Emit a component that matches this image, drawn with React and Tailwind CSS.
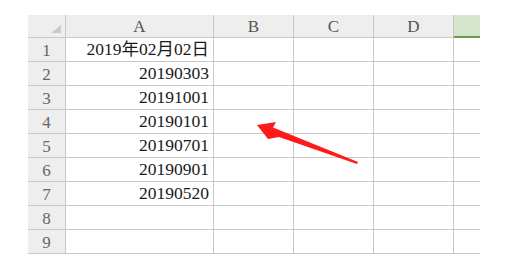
import React from "react";

const rows = [
  "2019年02月02日",
  "20190303",
  "20191001",
  "20190101",
  "20190701",
  "20190901",
  "20190520",
  "",
  "",
];

const font = { fontFamily: '"Liberation Serif", "Noto Sans CJK SC", serif' };

export default function App() {
  return (
    <div className="relative w-[515px] h-[255px] overflow-hidden bg-white pt-[15px] pl-[28px]" style={font}>
      <div className="grid grid-cols-[38px_148px_80px_80px_80px_26px] auto-rows-[24px] grid-rows-[23px]">
        {/* header row */}
        <div className="relative bg-[#eeeeee] border-r border-b border-[#c8c8c8]">
          <div className="absolute right-[4px] bottom-[4px] w-0 h-0 border-l-[10px] border-l-transparent border-b-[8px] border-b-[#cbcbcb]" />
        </div>
        {["A", "B", "C", "D"].map((c) => (
          <div
            key={c}
            className="bg-[#eeeeee] border-r border-b border-[#c8c8c8] flex items-center justify-center text-[17px] text-[#555555] leading-none"
          >
            {c}
          </div>
        ))}
        <div className="bg-[#d6e6cc] border-b-2 border-[#6b9a48]" />

        {rows.map((v, i) => (
          <React.Fragment key={i}>
            <div className="bg-[#eeeeee] border-r border-b border-[#c8c8c8] flex items-center justify-center text-[17px] text-[#666666] leading-none pt-[1px]">
              {i + 1}
            </div>
            <div className="border-r border-b border-[#c8c8c8] flex items-center justify-end pr-[4px] pt-[1px] text-[17.5px] text-[#1a1a1a] leading-none">
              {v}
            </div>
            <div className="border-r border-b border-[#c8c8c8]" />
            <div className="border-r border-b border-[#c8c8c8]" />
            <div className="border-r border-b border-[#c8c8c8]" />
            <div className="border-b border-[#c8c8c8]" />
          </React.Fragment>
        ))}
      </div>

      <svg className="absolute left-0 top-0" width="515" height="255" viewBox="0 0 515 255">
        <polygon
          points="257,125 276,122 273,127.5 358,162 357,164 279,137 268,139"
          fill="#ff1a1a"
        />
      </svg>
    </div>
  );
}
